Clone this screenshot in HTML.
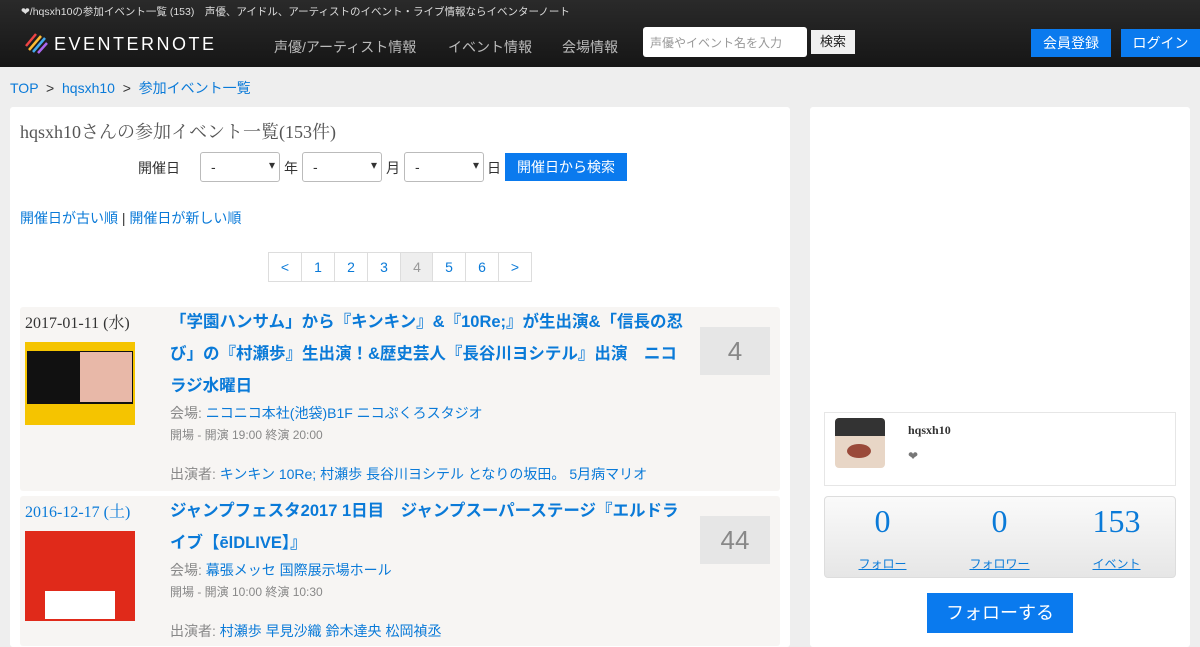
<!DOCTYPE html>
<html><head><meta charset="utf-8"><style>
*{box-sizing:border-box}
body{margin:0;width:1200px;height:630px;overflow:hidden;background:#eeeeee;font-family:"Liberation Sans","Noto Sans CJK JP",sans-serif;color:#333;position:relative}
a{color:#0a7ad8;text-decoration:none}
.hdr{position:absolute;left:0;top:0;width:1200px;height:67px;background:linear-gradient(#2a2a2a,#161616)}
.abs{position:absolute}
.serif{font-family:"Liberation Serif","Noto Serif CJK SC",serif}
.panel{position:absolute;background:#fff;border-radius:3px}
.sel{position:absolute;top:152px;width:80px;height:30px;border:1px solid #bbb;border-radius:3px;background:#fff;font-size:14px;padding:6px 10px}
.sel:after{content:"▾";position:absolute;right:4px;top:5px;font-size:12px}
.pg{position:absolute;top:252px;height:30px;border:1px solid #ddd;font-size:14px;color:#0a7ad8;text-align:center;line-height:28px;width:34px;background:#fff}
.ev{position:absolute;left:20px;width:760px;background:#f7f5f3;border-radius:3px}
.t{font-weight:bold;font-size:16.5px;line-height:32px;color:#0a7ad8}
.s{font-size:14px;color:#888}
.cnt{position:absolute;left:680px;width:70px;height:48px;background:#e6e6e6;font-size:26px;color:#888;text-align:center;line-height:48px}
</style></head><body>
<div class="hdr">
<div class="abs" style="left:21px;top:4px;font-size:10.5px;color:#ddd">❤/hqsxh10の参加イベント一覧 (153)　声優、アイドル、アーティストのイベント・ライブ情報ならイベンターノート</div>
<svg class="abs" style="left:24px;top:32px" width="24" height="22"><g stroke-width="2.5"><line x1="2" y1="14" x2="12" y2="2" stroke="#e44"/><line x1="5" y1="18" x2="17" y2="4" stroke="#fb3"/><line x1="9" y1="20" x2="21" y2="6" stroke="#4ae"/><line x1="14" y1="21" x2="23" y2="11" stroke="#a6e"/></g></svg>
<div class="abs" style="left:54px;top:34px;font-size:18px;color:#fff;letter-spacing:2.5px">EVENTERNOTE</div>
<div class="abs" style="left:274px;top:37px;font-size:14px;color:#bbb">声優/アーティスト情報</div>
<div class="abs" style="left:448px;top:37px;font-size:14px;color:#bbb">イベント情報</div>
<div class="abs" style="left:562px;top:37px;font-size:14px;color:#bbb">会場情報</div>
<div class="abs" style="left:643px;top:27px;width:164px;height:30px;background:#fff;border-radius:3px;font-size:12px;color:#999;padding:7px">声優やイベント名を入力</div>
<div class="abs" style="left:811px;top:30px;width:44px;height:24px;background:#f0f0f0;font-size:13px;text-align:center;line-height:24px;color:#222">検索</div>
<div class="abs" style="left:1031px;top:29px;width:80px;height:28px;background:#0a7aee;color:#fff;font-size:14px;text-align:center;line-height:28px">会員登録</div>
<div class="abs" style="left:1121px;top:29px;width:79px;height:28px;background:#0a7aee;color:#fff;font-size:14px;text-align:center;line-height:28px">ログイン</div>
</div>
<div class="abs" style="left:10px;top:78px;font-size:14px"><a>TOP</a> &nbsp;&gt;&nbsp; <a>hqsxh10</a> &nbsp;&gt;&nbsp; <a>参加イベント一覧</a></div>
<div class="panel" style="left:10px;top:107px;width:780px;height:540px">
<div class="abs serif" style="left:10px;top:11px;font-size:18px;color:#555">hqsxh10さんの参加イベント一覧(153件)</div>
<div class="abs" style="left:128px;top:51px;font-size:14px">開催日</div>
</div>
<div class="sel" style="left:200px">-</div><div class="abs" style="left:284px;top:158px;font-size:14px">年</div>
<div class="sel" style="left:302px">-</div><div class="abs" style="left:386px;top:158px;font-size:14px">月</div>
<div class="sel" style="left:404px">-</div><div class="abs" style="left:487px;top:158px;font-size:14px">日</div>
<div class="abs" style="left:505px;top:153px;width:122px;height:28px;background:#0a7aee;color:#fff;font-size:14px;text-align:center;line-height:28px">開催日から検索</div>
<div class="abs" style="left:20px;top:208px;font-size:14px"><a>開催日が古い順</a> | <a>開催日が新しい順</a></div>
<div class="pg" style="left:268px">&lt;</div><div class="pg" style="left:301px">1</div><div class="pg" style="left:334px">2</div><div class="pg" style="left:367px">3</div><div class="pg" style="left:400px;background:#eee;color:#999">4</div><div class="pg" style="left:432px">5</div><div class="pg" style="left:465px">6</div><div class="pg" style="left:498px">&gt;</div>
<div class="ev" style="top:307px;height:184px">
<div class="abs serif" style="left:5px;top:3px;font-size:16px;color:#333">2017-01-11 (水)</div>
<div class="abs" style="left:5px;top:35px;width:110px;height:83px;background:#f5c400"><div style="position:absolute;left:2px;top:9px;width:106px;height:53px;background:#111"></div><div style="position:absolute;left:55px;top:10px;width:52px;height:50px;background:#e8b8a8"></div></div>
<div class="abs" style="left:150px;top:-1px;width:515px"><div class="t">「学園ハンサム」から『キンキン』&『10Re;』が生出演&「信長の忍び」の『村瀬歩』生出演！&歴史芸人『長谷川ヨシテル』出演　ニコラジ水曜日</div>
<div style="font-size:14px;color:#888;margin-top:1px">会場: <a>ニコニコ本社(池袋)B1F ニコぷくろスタジオ</a></div>
<div class="s" style="font-size:12px;margin-top:3px">開場 - 開演 19:00 終演 20:00</div>
<div style="font-size:14px;color:#888;margin-top:21px">出演者: <a>キンキン 10Re; 村瀬歩 長谷川ヨシテル となりの坂田。 5月病マリオ</a></div></div>
<div class="cnt" style="top:20px">4</div>
</div>
<div class="ev" style="top:496px;height:150px">
<div class="abs serif" style="left:5px;top:3px;font-size:16px;color:#0a7ad8">2016-12-17 (土)</div>
<div class="abs" style="left:5px;top:35px;width:110px;height:90px;background:#e02a1a"><div style="position:absolute;left:20px;top:60px;width:70px;height:28px;background:#fff"></div></div>
<div class="abs" style="left:150px;top:-1px;width:515px"><div class="t">ジャンプフェスタ2017 1日目　ジャンプスーパーステージ『エルドライブ【ēlDLIVE】』</div>
<div style="font-size:14px;color:#888;margin-top:1px">会場: <a>幕張メッセ 国際展示場ホール</a></div>
<div class="s" style="font-size:12px;margin-top:3px">開場 - 開演 10:00 終演 10:30</div>
<div style="font-size:14px;color:#888;margin-top:21px">出演者: <a>村瀬歩 早見沙織 鈴木達央 松岡禎丞</a></div></div>
<div class="cnt" style="top:20px">44</div>
</div>
<div class="panel" style="left:810px;top:107px;width:380px;height:540px">
<div class="abs" style="left:14px;top:305px;width:352px;height:74px;border:1px solid #e6e6e6"></div>
<div class="abs" style="left:25px;top:311px;width:50px;height:50px;background:#e8d6c6;border-radius:4px;overflow:hidden"><div style="position:absolute;left:0;top:0;width:50px;height:18px;background:#333"></div><div style="position:absolute;left:12px;top:26px;width:24px;height:14px;background:#9a4a3a;border-radius:50%"></div></div>
<div class="abs serif" style="left:98px;top:316px;font-size:12px;font-weight:bold">hqsxh10</div>
<div class="abs" style="left:98px;top:342px;font-size:12px;color:#777">❤</div>
<div class="abs" style="left:14px;top:389px;width:352px;height:82px;border-radius:4px;background:linear-gradient(#fafafa,#e6e6e6);border:1px solid #ddd"></div>
<div class="abs serif" style="left:14px;top:396px;width:117px;text-align:center;font-size:32px;color:#0a7ad8">0</div>
<div class="abs serif" style="left:131px;top:396px;width:117px;text-align:center;font-size:32px;color:#0a7ad8">0</div>
<div class="abs serif" style="left:248px;top:396px;width:117px;text-align:center;font-size:32px;color:#0a7ad8">153</div>
<div class="abs" style="left:14px;top:448px;width:117px;text-align:center;font-size:12px"><a style="text-decoration:underline">フォロー</a></div>
<div class="abs" style="left:131px;top:448px;width:117px;text-align:center;font-size:12px"><a style="text-decoration:underline">フォロワー</a></div>
<div class="abs" style="left:248px;top:448px;width:117px;text-align:center;font-size:12px"><a style="text-decoration:underline">イベント</a></div>
<div class="abs" style="left:117px;top:486px;width:146px;height:40px;background:#0a7aee;color:#fff;font-size:18px;text-align:center;line-height:40px">フォローする</div>
</div>
</body></html>
